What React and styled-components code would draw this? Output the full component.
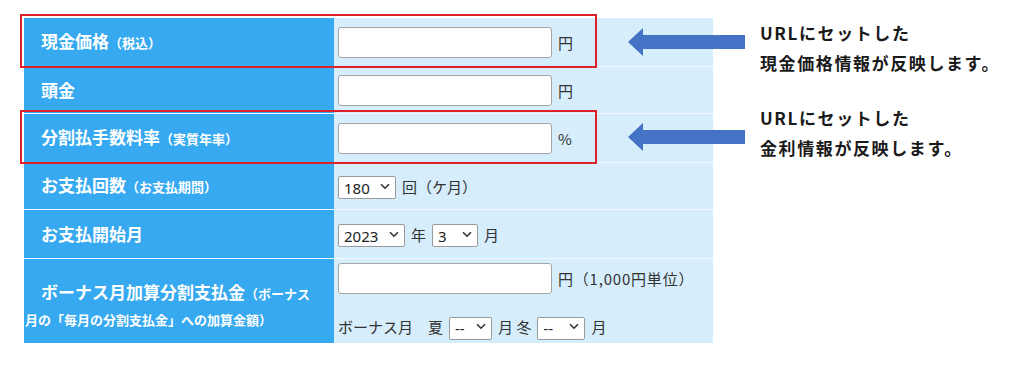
import React from "react";
import styled, { createGlobalStyle } from "styled-components";

const GlobalStyle = createGlobalStyle`
  html, body {
    margin: 0;
    padding: 0;
    background: #ffffff;
  }
  body {
    font-family: "Noto Sans", "Noto Sans CJK JP", sans-serif;
    color: #333;
  }
`;

const Page = styled.div`
  position: relative;
  width: 1023px;
  height: 368px;
  box-sizing: border-box;
  padding: 18px 0 0 24px;
  display: flex;
  align-items: flex-start;
`;

const Form = styled.div`
  width: 689px;
  display: grid;
  grid-template-columns: 310px 379px;
  grid-template-rows: 48px 46px 48px 46px 48px 84px;
  row-gap: 1px;
  background: #f2f9fe;
`;

const Label = styled.div`
  background: #36a9f0;
  color: #fff;
  font-family: "Noto Sans CJK JP", sans-serif;
  font-weight: 700;
  font-size: 17px;
  line-height: 24px;
  padding: 0 ${(p) => (p.$narrow ? "14px" : "4px")} 0 1px;
  text-indent: 16px;
  display: flex;
  align-items: center;
`;

const LabelText = styled.div`
  padding-top: ${(p) => (p.$low ? "9px" : "0")};
`;

const Small = styled.small`
  font-size: 13px;
`;

const Value = styled.div`
  background: #d6edfb;
  display: flex;
  flex-direction: ${(p) => (p.$stack ? "column" : "row")};
  align-items: ${(p) => (p.$stack ? "flex-start" : "center")};
  justify-content: ${(p) => (p.$stack ? "space-between" : "flex-start")};
  padding: ${(p) => (p.$stack ? "4px 4px 5px" : "0 4px")};
  gap: 6px;
  font-family: "Noto Sans CJK JP", sans-serif;
  color: #333;
`;

const Line = styled.div`
  display: flex;
  align-items: center;
  gap: 6px;
`;

const TextInput = styled.input`
  width: 214px;
  height: 31px;
  box-sizing: border-box;
  border: 1px solid #a5a5a5;
  border-radius: 3px;
  background: #fff;
  padding: 0 6px;
  font-size: 14px;
  outline: none;
`;

const Unit = styled.span`
  font-family: "Noto Sans CJK JP", sans-serif;
  font-size: 15px;
  letter-spacing: ${(p) => (p.$spaced ? "0.8px" : "0")};
  color: #333;
  white-space: nowrap;
`;

const SelectWrap = styled.div`
  position: relative;
  width: ${(p) => p.$w}px;
  height: 23px;
  svg {
    position: absolute;
    right: 6px;
    top: 8px;
    pointer-events: none;
  }
`;

const Select = styled.select`
  appearance: none;
  width: 100%;
  height: 100%;
  box-sizing: border-box;
  border: 1px solid #9a9a9a;
  border-radius: 2px;
  background: #fff;
  padding: 0 0 0 5px;
  font-family: "Noto Sans", sans-serif;
  font-size: 15px;
  color: #222;
  outline: none;
`;

const Notes = styled.div`
  margin-left: 47px;
  display: flex;
  flex-direction: column;
  gap: 25px;
`;

const Note = styled.p`
  margin: 0;
  font-family: "Noto Sans CJK JP", sans-serif;
  font-weight: 700;
  font-size: 17px;
  line-height: 30px;
  letter-spacing: 1.6px;
  color: #1a1a1a;
`;

const Highlight = styled.div`
  position: absolute;
  left: 20px;
  top: ${(p) => p.$top}px;
  width: 577px;
  height: 54px;
  box-sizing: border-box;
  border: 2px solid #dc2128;
  pointer-events: none;
`;

const Arrow = styled.svg`
  position: absolute;
  left: 628px;
  top: ${(p) => p.$top}px;
`;

function Chevron() {
  return (
    <svg width="10" height="7" viewBox="0 0 10 7">
      <path d="M1 1.2 L5 5.2 L9 1.2" fill="none" stroke="#333" strokeWidth="1.6" />
    </svg>
  );
}

function Dropdown({ width, value, options }) {
  return (
    <SelectWrap $w={width}>
      <Select defaultValue={value}>
        {options.map((o) => (
          <option key={o}>{o}</option>
        ))}
      </Select>
      <Chevron />
    </SelectWrap>
  );
}

function BlueArrow({ top }) {
  return (
    <Arrow $top={top} width="118" height="28" viewBox="0 0 118 28">
      <polygon points="0,14 15,0 15,7 117,7 117,21 15,21 15,28" fill="#4472c4" />
    </Arrow>
  );
}

const months = ["--", "1", "2", "3", "4", "5", "6", "7", "8", "9", "10", "11", "12"];

export default function App() {
  return (
    <>
      <GlobalStyle />
      <Page>
        <Form>
          <Label>
            <LabelText>
              現金価格<Small>（税込）</Small>
            </LabelText>
          </Label>
          <Value>
            <TextInput />
            <Unit>円</Unit>
          </Value>

          <Label>
            <LabelText>頭金</LabelText>
          </Label>
          <Value>
            <TextInput />
            <Unit>円</Unit>
          </Value>

          <Label>
            <LabelText>
              分割払手数料率<Small>（実質年率）</Small>
            </LabelText>
          </Label>
          <Value>
            <TextInput />
            <Unit>%</Unit>
          </Value>

          <Label>
            <LabelText>
              お支払回数<Small>（お支払期間）</Small>
            </LabelText>
          </Label>
          <Value>
            <Dropdown width={58} value="180" options={["120", "150", "180", "240"]} />
            <Unit>回（ケ月）</Unit>
          </Value>

          <Label>
            <LabelText>お支払開始月</LabelText>
          </Label>
          <Value>
            <Dropdown width={67} value="2023" options={["2022", "2023", "2024"]} />
            <Unit>年</Unit>
            <Dropdown width={46} value="3" options={months.slice(1)} />
            <Unit>月</Unit>
          </Value>

          <Label $narrow>
            <LabelText $low>
              ボーナス月加算分割支払金<Small>（ボーナス</Small>
              <Small>月の「毎月の分割支払金」への加算金額）</Small>
            </LabelText>
          </Label>
          <Value $stack>
            <Line>
              <TextInput />
              <Unit $spaced>円（1,000円単位）</Unit>
            </Line>
            <Line>
              <Unit>ボーナス月　夏</Unit>
              <Dropdown width={43} value="--" options={months} />
              <Unit>月 冬</Unit>
              <Dropdown width={48} value="--" options={months} />
              <Unit>月</Unit>
            </Line>
          </Value>
        </Form>

        <Notes>
          <Note>
            URLにセットした
            <br />
            現金価格情報が反映します。
          </Note>
          <Note>
            URLにセットした
            <br />
            金利情報が反映します。
          </Note>
        </Notes>

        <Highlight $top={14} />
        <Highlight $top={110} />
        <BlueArrow top={28} />
        <BlueArrow top={123} />
      </Page>
    </>
  );
}
